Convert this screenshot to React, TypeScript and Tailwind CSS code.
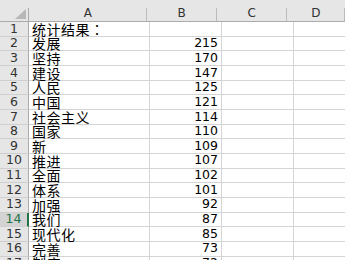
const rows: [string, string][] = [
  ["统计结果：", ""],
  ["发展", "215"],
  ["坚持", "170"],
  ["建设", "147"],
  ["人民", "125"],
  ["中国", "121"],
  ["社会主义", "114"],
  ["国家", "110"],
  ["新", "109"],
  ["推进", "107"],
  ["全面", "102"],
  ["体系", "101"],
  ["加强", "92"],
  ["我们", "87"],
  ["现代化", "85"],
  ["完善", "73"],
  ["制度", "72"],
];

const cjk = "font-['Noto_Sans_CJK_SC',sans-serif]";
const num = "font-['DejaVu_Sans',sans-serif]";

function HeaderCell({ label, width }: { label: string; width: string }) {
  return (
    <div className={`relative ${width} h-full flex items-center justify-center pt-[4px] text-[12px] text-[#333] ${num}`}>
      {label}
      <span className="absolute right-0 bottom-0 w-px h-[13px] bg-[#bcbcbc]" />
    </div>
  );
}

function Word({ text }: { text: string }) {
  // full-width colon sits centred, as in the sheet
  if (text.endsWith("：")) {
    return (
      <>
        {text.slice(0, -1)}
        <span className="font-['Noto_Sans_CJK_TC',sans-serif]">：</span>
      </>
    );
  }
  return <>{text}</>;
}

export default function App() {
  return (
    <div className="w-[345px] h-[260px] overflow-hidden bg-white">
      <div className="flex h-[22px] bg-[#e6e6e6] border-b border-[#ababab]">
        <div className="relative w-[29px] h-full shrink-0">
          <svg className="absolute right-[3px] bottom-[2px]" width="11" height="10" viewBox="0 0 11 10">
            <polygon points="11,0 11,10 0,10" fill="#b7b7b7" />
          </svg>
          <span className="absolute right-0 bottom-0 w-px h-[13px] bg-[#ababab]" />
        </div>
        <HeaderCell label="A" width="w-[121px]" />
        <HeaderCell label="B" width="w-[72px]" />
        <HeaderCell label="C" width="w-[72px]" />
        <HeaderCell label="D" width="w-[60px]" />
      </div>
      {rows.map(([word, count], i) => {
        const selected = i === 13;
        return (
          <div key={i} className="flex h-[14.67px]">
            <div
              className={`w-[29px] shrink-0 flex items-center justify-center text-[12.5px] leading-none border-b border-[#cfcfcf] ${num} ${
                selected
                  ? "bg-[#d3d3d3] text-[#217346] border-r-2 border-r-[#217346]"
                  : "bg-[#e6e6e6] text-[#333] border-r border-r-[#ababab]"
              }`}
            >
              {i + 1}
            </div>
            <div className={`w-[121px] shrink-0 flex items-center pl-[3px] text-[14px] tracking-[0.5px] leading-none text-black border-r border-b border-[#d4d4d4] whitespace-nowrap ${cjk}`}>
              <Word text={word} />
            </div>
            <div className={`w-[72px] shrink-0 flex items-center justify-end pr-[3px] text-[12.5px] leading-none text-black border-r border-b border-[#d4d4d4] ${num}`}>
              {count}
            </div>
            <div className="w-[72px] shrink-0 border-r border-b border-[#d4d4d4]" />
            <div className="w-[60px] shrink-0 border-b border-[#d4d4d4]" />
          </div>
        );
      })}
    </div>
  );
}
